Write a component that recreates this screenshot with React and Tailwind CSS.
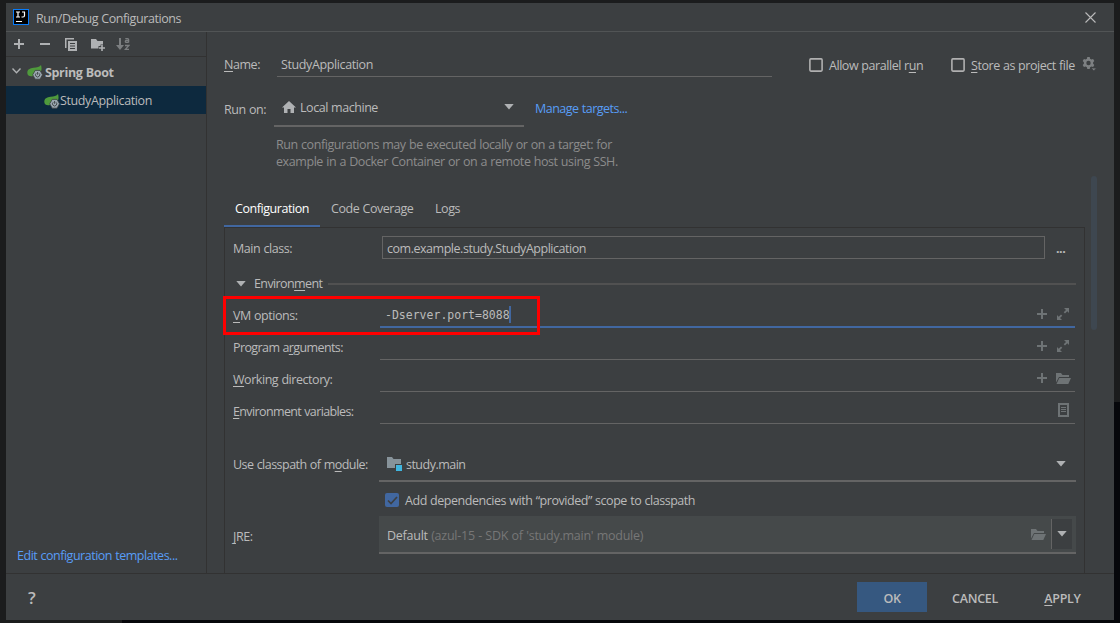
function U({ children }) {
  return <span className="underline decoration-1 underline-offset-2">{children}</span>;
}

function Plus({ className }) {
  return (
    <svg className={className} width="10" height="10" viewBox="0 0 10 10" fill="currentColor" shapeRendering="crispEdges">
      <path d="M4 0h2v4h4v2H6v4H4V6H0V4h4z" />
    </svg>
  );
}

function Expand() {
  return (
    <svg width="12" height="12" viewBox="0 0 12 12" fill="currentColor">
      <path d="M7 0h5v5L10.3 3.300 8 5.600 6.700 4.300 9 2z M0 7l1.700 1.700L4 6.400l1.300 1.300L3 10l2 2H0z" />
    </svg>
  );
}

function FolderOpen() {
  return (
    <svg width="15" height="11" viewBox="0 0 15 11" fill="currentColor">
      <path d="M0 0h5l1.500 2H13v2H3L0 9.500z M3.300 5H15l-2.700 6H.5z" />
    </svg>
  );
}

function ListIcon() {
  return (
    <svg width="11" height="14" viewBox="0 0 11 14" fill="none" stroke="currentColor" shapeRendering="crispEdges">
      <rect x="1" y="1" width="9" height="12" strokeWidth="2" />
      <path d="M3 4.500h5M3 6.500h5M3 8.500h5" />
    </svg>
  );
}

function Arrow({ className }) {
  return (
    <svg className={className} width="10" height="6" viewBox="0 0 10 6" fill="currentColor">
      <path d="M.3 0h9.400L5 5.500z" />
    </svg>
  );
}

function SpringIcon() {
  return (
    <svg className="shrink-0" width="16" height="15" viewBox="0 0 16 15">
      <path d="M14 0c.7 2.200.8 4.500 0 6.500L10 6 6 11C3 11.700.5 10.800.3 8 .2 4.500 3 3.200 6.500 2.800 10 2.500 12.600 2 14 0z" fill="#4f9a3c" />
      <path d="M8.200 5.400h4.800l2.500 4.400-2.500 4.400H8.200L5.700 9.800z" fill="#9aa7b0" stroke="#3c3f41" strokeWidth=".8" strokeLinejoin="round" />
      <path d="M9.200 8.300a2.100 2.100 0 1 0 2.800 0" fill="none" stroke="#3c3f41" strokeWidth=".9" />
      <path d="M10.600 7v2.800" stroke="#3c3f41" strokeWidth=".9" />
    </svg>
  );
}

function Checkbox() {
  return (
    <svg className="shrink-0" width="14" height="14" viewBox="0 0 14 14">
      <rect x=".9" y=".9" width="12.200" height="12.200" rx="1" fill="none" stroke="#b0b0b0" strokeWidth="1.600" />
    </svg>
  );
}

function FieldRow({ label, children, icons, focus }) {
  return (
    <div className="flex h-8 items-start">
      <div className="w-[147px] shrink-0 pt-[7px]">{label}</div>
      <div
        className={
          focus
            ? "flex h-[28px] w-[695px] items-center justify-between border-b-2 border-[#4167a0] pt-[2px] pr-[6px] pl-[5px]"
            : "flex h-[28px] w-[695px] items-center justify-between border-b border-[#646464] pr-[6px] pl-[5px]"
        }
      >
        <div className="flex items-center pt-px">{children}</div>
        <div className="flex items-center gap-[10px] text-[#6e7375]">{icons}</div>
      </div>
    </div>
  );
}

function Sidebar() {
  return (
    <div className="flex w-[201px] shrink-0 flex-col border-r border-[#323232]">
      <div className="flex h-[25px] items-center border-b border-[#323232] pl-2 text-[#afb1b3]">
        <Plus />
        <svg className="ml-4" width="10" height="2" fill="currentColor"><path d="M0 0h10v2H0z" /></svg>
        <svg className="ml-[15px]" width="12" height="13" viewBox="0 0 12 13" fill="currentColor">
          <path d="M0 0h9v1.500H1.500V10H0z" />
          <path fillRule="evenodd" d="M3 3h9v10H3z M5 5v1h5V5z M5 7.500v1h5v-1z M5 10v1h5v-1z" />
        </svg>
        <svg className="ml-[14px]" width="15" height="13" viewBox="0 0 15 13" fill="currentColor">
          <path d="M0 1h5l1.500 2H12v3.500H9.500V8H7.500v2.500H0z" />
          <path d="M10.200 7h1.600v2.200H14v1.600h-2.200V13h-1.600v-2.200H8V9.200h2.200z" />
        </svg>
        <div className="ml-[10px] flex items-center text-[#7b7e80]">
          <svg width="8" height="12" viewBox="0 0 8 12" fill="currentColor">
            <path d="M3 0h2v7h3L4 12 0 7h3z" />
          </svg>
          <svg width="6" height="14" viewBox="0 0 6 14" fill="none" stroke="currentColor" strokeWidth="1.300">
            <path d="M1.300 1.700h2.400q.9 0 .9.900v3M4.600 3.500H2.200q-.9 0-.9.900t.9.900h2.400M1 8.500h3.800L1.300 12.400h3.700" />
          </svg>
        </div>
      </div>
      <div className="flex h-[29px] items-center pl-[6px] font-bold">
        <svg className="-mt-px" width="9" height="6" viewBox="0 0 9 6" fill="none" stroke="#afb1b3" strokeWidth="1.400"><path d="M.5.500l4 4.300 4-4.300" /></svg>
        <span className="mr-[2px] ml-[6px] flex pt-[2px]"><SpringIcon /></span>
        <span className="pt-[3px] tracking-[-0.350px]">Spring Boot</span>
      </div>
      <div className="flex h-7 items-center bg-[#0d293e] pl-[38px]">
        <span className="flex pt-[3px]"><SpringIcon /></span>
        <span className="pt-[2px] tracking-[-0.380px]">StudyApplication</span>
      </div>
      <div className="grow" />
      <div className="pb-2 pl-[11px] tracking-[-0.480px] text-[#589df6]">Edit configuration templates...</div>
    </div>
  );
}

function Header() {
  return (
    <div className="pl-[17px]">
      <div className="flex h-[45px] items-start">
        <div className="w-[53px] shrink-0 pt-[24px]"><U>N</U>ame:</div>
        <div className="flex h-[45px] w-[495px] shrink-0 items-end border-b border-[#646464] pb-[2px] pl-1 tracking-[-0.380px]">StudyApplication</div>
        <div className="ml-[37px] flex shrink-0 items-start pt-[26px]">
          <Checkbox />
          <span className="-mt-px ml-[6px] w-[122px]">Allow parallel r<U>u</U>n</span>
          <Checkbox />
          <span className="-mt-px ml-[6px] w-[111px]"><U>S</U>tore as project file</span>
          <svg className="-mt-px" width="15" height="15" viewBox="0 0 15 15" fill="#7d8082">
            <path fillRule="evenodd" d="M5.300 0h2.400l.4 1.700 1.300.7 1.700-.5 1.200 2.100-1.200 1.300v1.400l1.200 1.300-1.200 2.100-1.700-.5-1.300.7-.4 1.700H5.300l-.4-1.700-1.300-.7-1.700.5L.7 8l1.200-1.300V5.300L.7 4l1.200-2.100 1.700.5 1.300-.7z M6.500 3.800a2.200 2.200 0 1 0 0 4.400 2.200 2.200 0 0 0 0-4.400z" />
            <path d="M9 11h5.500l-2.700 3z" stroke="#3c3f41" strokeWidth=".8" />
          </svg>
        </div>
      </div>
      <div className="mt-3 flex h-[38px] items-start">
        <div className="w-[50px] shrink-0 pt-[12px]">Run on:</div>
        <div className="flex h-[38px] w-[250px] items-center border-b-2 border-[#646464] pr-[10px] pl-2">
          <svg width="14" height="12" viewBox="0 0 14 12" fill="#afb1b3"><path d="M7 0l7 6.500h-2V12H8.500V8h-3v4H2V6.500H0z" /></svg>
          <span className="ml-1 grow pt-[2px]">Local machine</span>
          <Arrow className="text-[#afb1b3]" />
        </div>
        <div className="ml-[11px] pt-[11px] tracking-[-0.500px] text-[#589df6]">Manage targets...</div>
      </div>
      <div className="mt-[9px] ml-[52px] leading-[17px] tracking-[-0.420px] text-[#8c8c8c]">
        <div>Run configurations may be executed locally or on a target: for</div>
        <div>example in a Docker Container or on a remote host using SSH.</div>
      </div>
    </div>
  );
}

function Panel() {
  return (
    <div className="relative ml-[17px] h-[346px] w-[861px] border-x border-t border-[#323232] pl-2">
      <div className="flex h-[39px] items-center">
        <div className="w-[149px] shrink-0 pt-[3px]">Main class:</div>
        <div className="flex h-[23px] w-[663px] items-center border border-[#646464] pt-[3px] pl-1 tracking-[-0.470px]">com.example.study.StudyApplication</div>
        <div className="ml-[11px] pt-[3px] font-bold">...</div>
      </div>
      <div className="flex h-8 items-center pt-[2px]">
        <Arrow className="ml-[3px] text-[#afb1b3]" />
        <span className="ml-2 w-[74px] tracking-[-0.600px]">Environ<U>m</U>ent</span>
        <span className="h-[2px] w-[748px] bg-[#515151]" />
      </div>
      <div className="pt-px">
        <FieldRow focus label={<><U>V</U>M options:</>} icons={<><Plus /><Expand /></>}>
          <span className="font-['DejaVu_Sans_Mono',monospace] text-[11.500px] tracking-normal">-Dserver.port=8088</span>
          <span className="-ml-px h-[17px] w-[2px] bg-[#4167a0]" />
        </FieldRow>
        <FieldRow label={<span className="tracking-[-0.600px]">Program a<U>r</U>guments:</span>} icons={<><Plus /><Expand /></>} />
        <FieldRow label={<><U>W</U>orking directory:</>} icons={<><Plus /><span className="-mr-[2px] -ml-px flex pt-px"><FolderOpen /></span></>} />
        <FieldRow label={<span className="tracking-[-0.620px]"><U>E</U>nvironment variables:</span>} icons={<ListIcon />} />
      </div>
      <div className="mt-[19px] flex h-[35px]">
        <div className="w-[146px] shrink-0 pt-[9px] tracking-[-0.520px]">Use classpath of m<U>o</U>dule:</div>
        <div className="flex h-[35px] w-[697px] items-center border-b-2 border-[#646464] pr-[10px] pl-2">
          <svg width="15" height="15" viewBox="0 0 15 15">
            <path d="M0 1h5l1.500 2H14v5H8v4H0z" fill="#87939a" />
            <path d="M9 9h6v6H9z" fill="#40b6e0" />
          </svg>
          <span className="ml-1 grow pt-[3px] tracking-[-0.520px]">study.main</span>
          <Arrow className="text-[#afb1b3]" />
        </div>
      </div>
      <div className="flex h-[34px] items-center pt-[2px] pl-[152px]">
        <span className="flex size-[14px] items-center justify-center rounded-[2px] bg-[#4167a0]">
          <svg width="11" height="9" viewBox="0 0 11 9" fill="none" stroke="#3c3f41" strokeWidth="1.700"><path d="M1 4.500l3 3L10 1" /></svg>
        </span>
        <span className="ml-[6px] pt-[2px]">Add dependencies with “provided” scope to classpath</span>
      </div>
      <div className="flex h-[38px]">
        <div className="w-[146px] shrink-0 pt-[12px]"><U>J</U>RE:</div>
        <div className="flex h-[38px] w-[697px] items-center border-b-2 border-[#646464] bg-[#45494a] pr-1 pl-2">
          <span className="grow pt-1 tracking-[-0.250px]">Default <span className="text-[#777777]">(azul-15 - SDK of 'study.main' module)</span></span>
          <span className="mr-[5px] text-[#6e7375]"><FolderOpen /></span>
          <span className="flex h-[30px] w-[21px] items-center justify-center border-l border-[#646464] bg-[#3c3f41] text-[#afb1b3]"><Arrow className="-ml-px" /></span>
        </div>
      </div>
      <div className="absolute top-[68px] -left-[2px] h-[39px] w-[317px] border-3 border-[#ff0000]" />
    </div>
  );
}

export default function App() {
  return (
    <div className="flex h-[623px] w-[1120px] overflow-hidden bg-[#1b1c1d] font-['Open_Sans',sans-serif] text-[12.500px] leading-[18px] tracking-[-0.450px] whitespace-nowrap text-[#bbbbbb] [word-spacing:0.400px]">
      <div className="flex w-[1114px] flex-col pt-[3px] pl-[6px]">
        <div className="flex h-[617px] flex-col bg-[#3c3f41]">
          <div className="flex h-[29px] shrink-0 items-center border-b border-[#515455] pr-[18px] pl-[7px]">
            <svg width="16" height="16" viewBox="0 0 16 16">
              <rect x=".5" y=".5" width="15" height="15" fill="#000" stroke="#087cfa" />
              <path d="M3 3h4M5 3v5M3 8h4M9 3h3M11.500 3v3.500q0 1.500-1.500 1.500H8.500M3 12.500h6" fill="none" stroke="#fff" strokeWidth="1.200" />
            </svg>
            <span className="ml-[7px] grow pt-1 tracking-[-0.420px]">Run/Debug Configurations</span>
            <svg width="11" height="11" viewBox="0 0 11 11" stroke="#bbbbbb" strokeWidth="1.100"><path d="M.5.500l10 10M10.500.500l-10 10" /></svg>
          </div>
          <div className="flex h-[541px] shrink-0">
            <Sidebar />
            <div className="flex w-[884px] flex-col">
              <Header />
              <div className="mt-[20px] ml-[17px] flex h-[37px] items-start">
                <div className="flex h-[37px] w-[96px] justify-center border-b-2 border-[#4167a0] pt-[10px] text-white">Configuration</div>
                <div className="ml-[11px] w-[104px] pt-[10px]">Code Coverage</div>
                <div className="pt-[10px]">Logs</div>
              </div>
              <Panel />
            </div>
            <div className="mt-[144px] h-[154px] w-[6px] rounded-full bg-[#3e4750]" />
          </div>
          <div className="flex grow items-center border-t border-[#323232] pr-[12px] pl-[22px] font-semibold">
            <span className="grow pt-px text-[17px]">?</span>
            <button className="h-[30px] w-[70px] bg-[#365880] pt-[3px]">OK</button>
            <button className="w-[96px] pt-[3px] tracking-[-0.300px]">CANCEL</button>
            <button className="w-[79px] pt-[3px] tracking-[-0.300px]"><U>A</U>PPLY</button>
          </div>
        </div>
        <div className="ml-[116px] h-[3px] bg-[#06070b]" />
      </div>
      <div className="mt-[402px] w-[6px] bg-[#06070b]" />
    </div>
  );
}
